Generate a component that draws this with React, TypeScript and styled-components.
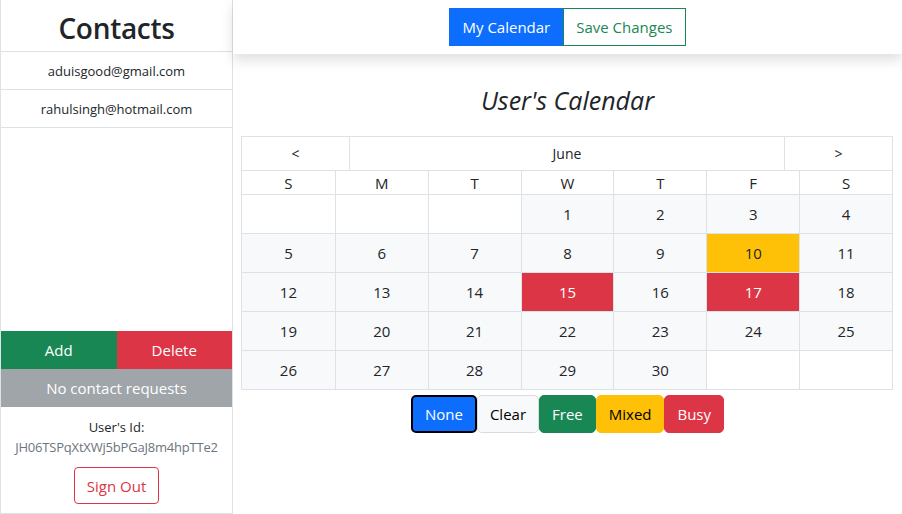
import React from "react";
import styled, { createGlobalStyle, css } from "styled-components";

const Global = createGlobalStyle`
  html, body { margin: 0; padding: 0; background: #fff; }
  body { font-family: "Open Sans", "Noto Sans", sans-serif; color: #212529; }
  * { box-sizing: border-box; }
`;

const Page = styled.div`
  display: flex;
  width: 902px;
  height: 514px;
  overflow: hidden;
`;

const Sidebar = styled.aside`
  width: 233px;
  flex-shrink: 0;
  display: flex;
  flex-direction: column;
  border-left: 1px solid #dee2e6;
  border-right: 1px solid #dee2e6;
  border-bottom: 1px solid #dee2e6;
  height: 514px;
`;

const Title = styled.h2`
  margin: 0;
  height: 51px;
  display: flex;
  align-items: center;
  justify-content: center;
  font-size: 28px;
  font-weight: 600;
  letter-spacing: -0.3px;
  padding-top: 4px;
`;

const ContactList = styled.div`
  display: flex;
  flex-direction: column;
  border-bottom: 1px solid #dee2e6;
`;

const ContactItem = styled.div`
  height: 38px;
  border-top: 1px solid #dee2e6;
  display: flex;
  align-items: center;
  justify-content: center;
  font-size: 13px;
`;

const Spacer = styled.div`
  flex: 1;
`;

const ButtonRow = styled.div`
  display: flex;
`;

const SquareButton = styled.button<{ $bg: string }>`
  flex: 1;
  height: 38px;
  border: none;
  border-radius: 0;
  background: ${(p) => p.$bg};
  color: #fff;
  font-family: inherit;
  font-size: 15px;
`;

const Requests = styled.div`
  height: 38px;
  background: #a0a5aa;
  color: #fff;
  font-size: 15px;
  display: flex;
  align-items: center;
  justify-content: center;
`;

const Footer = styled.div`
  display: flex;
  flex-direction: column;
  align-items: center;
  padding: 10px 0 9px;
  font-size: 13px;
`;

const IdLabel = styled.div`
  line-height: 20px;
  height: 20px;
`;

const IdValue = styled.div`
  color: #6c757d;
  line-height: 20px;
  height: 20px;
  letter-spacing: -0.2px;
`;

const OutlineButton = styled.button`
  margin-top: 10px;
  height: 37px;
  padding: 0 12px;
  border: 1px solid #dc3545;
  border-radius: 4px;
  background: #fff;
  color: #dc3545;
  font-family: inherit;
  font-size: 15px;
`;

const Main = styled.main`
  flex: 1;
  display: flex;
  flex-direction: column;
  min-width: 0;
`;

const TopBar = styled.nav`
  height: 54px;
  display: flex;
  align-items: center;
  justify-content: center;
  box-shadow: 0 6px 12px rgba(0, 0, 0, 0.13);
  position: relative;
  z-index: 1;
`;

const NavButton = styled.button<{ $active?: boolean }>`
  height: 38px;
  padding: 0 12px;
  border-radius: 0;
  font-family: inherit;
  font-size: 15px;
  ${(p) =>
    p.$active
      ? css`
          background: #0d6efd;
          border: 1px solid #0d6efd;
          color: #fff;
        `
      : css`
          background: #fff;
          border: 1px solid #198754;
          color: #198754;
        `}
`;

const CalTitle = styled.h3`
  margin: 31px 0 0;
  height: 51px;
  text-align: center;
  font-style: italic;
  font-weight: 400;
  font-size: 25px;
  line-height: 30px;
`;

const CalWrap = styled.div`
  margin: 0 9px 0 8px;
  border: 1px solid #dee2e6;
  border-bottom: none;
`;

const MonthRow = styled.div`
  display: grid;
  grid-template-columns: 107px 1fr 108px;
  height: 34px;
  border-bottom: 1px solid #dee2e6;
`;

const MonthCell = styled.div`
  display: flex;
  align-items: center;
  justify-content: center;
  font-size: 14px;
  & + & { border-left: 1px solid #dee2e6; }
`;

const DayGrid = styled.div`
  display: grid;
  grid-template-columns: repeat(7, 1fr);
`;

const HeadCell = styled.div`
  height: 24px;
  display: flex;
  align-items: center;
  justify-content: center;
  font-size: 15px;
  border-bottom: 1px solid #dee2e6;
  &:not(:nth-child(7n + 1)) { border-left: 1px solid #dee2e6; }
`;

type Status = "none" | "busy" | "mixed" | "free";

const statusBg: Record<Status, string> = {
  none: "#f8f9fa",
  busy: "#dc3545",
  mixed: "#ffc107",
  free: "#198754",
};

const DayCell = styled.div<{ $status?: Status; $empty?: boolean }>`
  height: 39px;
  display: flex;
  align-items: center;
  justify-content: center;
  font-size: 15px;
  border-bottom: 1px solid #dee2e6;
  &:not(:nth-child(7n + 1)) { border-left: 1px solid #dee2e6; }
  background: ${(p) => (p.$empty ? "#fff" : statusBg[p.$status || "none"])};
  color: ${(p) => (p.$status === "busy" || p.$status === "free" ? "#fff" : "#212529")};
`;

const Legend = styled.div`
  display: flex;
  justify-content: center;
  margin-top: 5px;
`;

const LegendButton = styled.button<{ $bg: string; $fg: string; $border: string; $selected?: boolean }>`
  height: 38px;
  padding: 0 12px;
  border-radius: 5px;
  font-family: inherit;
  font-size: 15px;
  background: ${(p) => p.$bg};
  color: ${(p) => p.$fg};
  border: ${(p) => (p.$selected ? "2px solid #000" : `1px solid ${p.$border}`)};
`;

const days: { d?: number; s?: Status }[] = [
  {}, {}, {},
  ...Array.from({ length: 30 }, (_, i) => {
    const d = i + 1;
    const s: Status = d === 10 ? "mixed" : d === 15 || d === 17 ? "busy" : "none";
    return { d, s };
  }),
  {}, {},
];

export default function App() {
  return (
    <>
      <Global />
      <Page>
        <Sidebar>
          <Title>Contacts</Title>
          <ContactList>
            <ContactItem>aduisgood@gmail.com</ContactItem>
            <ContactItem>rahulsingh@hotmail.com</ContactItem>
          </ContactList>
          <Spacer />
          <ButtonRow>
            <SquareButton $bg="#198754">Add</SquareButton>
            <SquareButton $bg="#dc3545">Delete</SquareButton>
          </ButtonRow>
          <Requests>No contact requests</Requests>
          <Footer>
            <IdLabel>User's Id:</IdLabel>
            <IdValue>JH06TSPqXtXWj5bPGaJ8m4hpTTe2</IdValue>
            <OutlineButton>Sign Out</OutlineButton>
          </Footer>
        </Sidebar>
        <Main>
          <TopBar>
            <NavButton $active>My Calendar</NavButton>
            <NavButton>Save Changes</NavButton>
          </TopBar>
          <CalTitle>User's Calendar</CalTitle>
          <CalWrap>
            <MonthRow>
              <MonthCell>&lt;</MonthCell>
              <MonthCell>June</MonthCell>
              <MonthCell>&gt;</MonthCell>
            </MonthRow>
            <DayGrid>
              {["S", "M", "T", "W", "T", "F", "S"].map((n, i) => (
                <HeadCell key={i}>{n}</HeadCell>
              ))}
              {days.map((c, i) => (
                <DayCell key={i} $empty={!c.d} $status={c.s}>
                  {c.d}
                </DayCell>
              ))}
            </DayGrid>
          </CalWrap>
          <Legend>
            <LegendButton $bg="#0d6efd" $fg="#fff" $border="#0d6efd" $selected>None</LegendButton>
            <LegendButton $bg="#f8f9fa" $fg="#000" $border="#dadbdc">Clear</LegendButton>
            <LegendButton $bg="#198754" $fg="#fff" $border="#198754">Free</LegendButton>
            <LegendButton $bg="#ffc107" $fg="#000" $border="#ffc107">Mixed</LegendButton>
            <LegendButton $bg="#dc3545" $fg="#fff" $border="#dc3545">Busy</LegendButton>
          </Legend>
        </Main>
      </Page>
    </>
  );
}
